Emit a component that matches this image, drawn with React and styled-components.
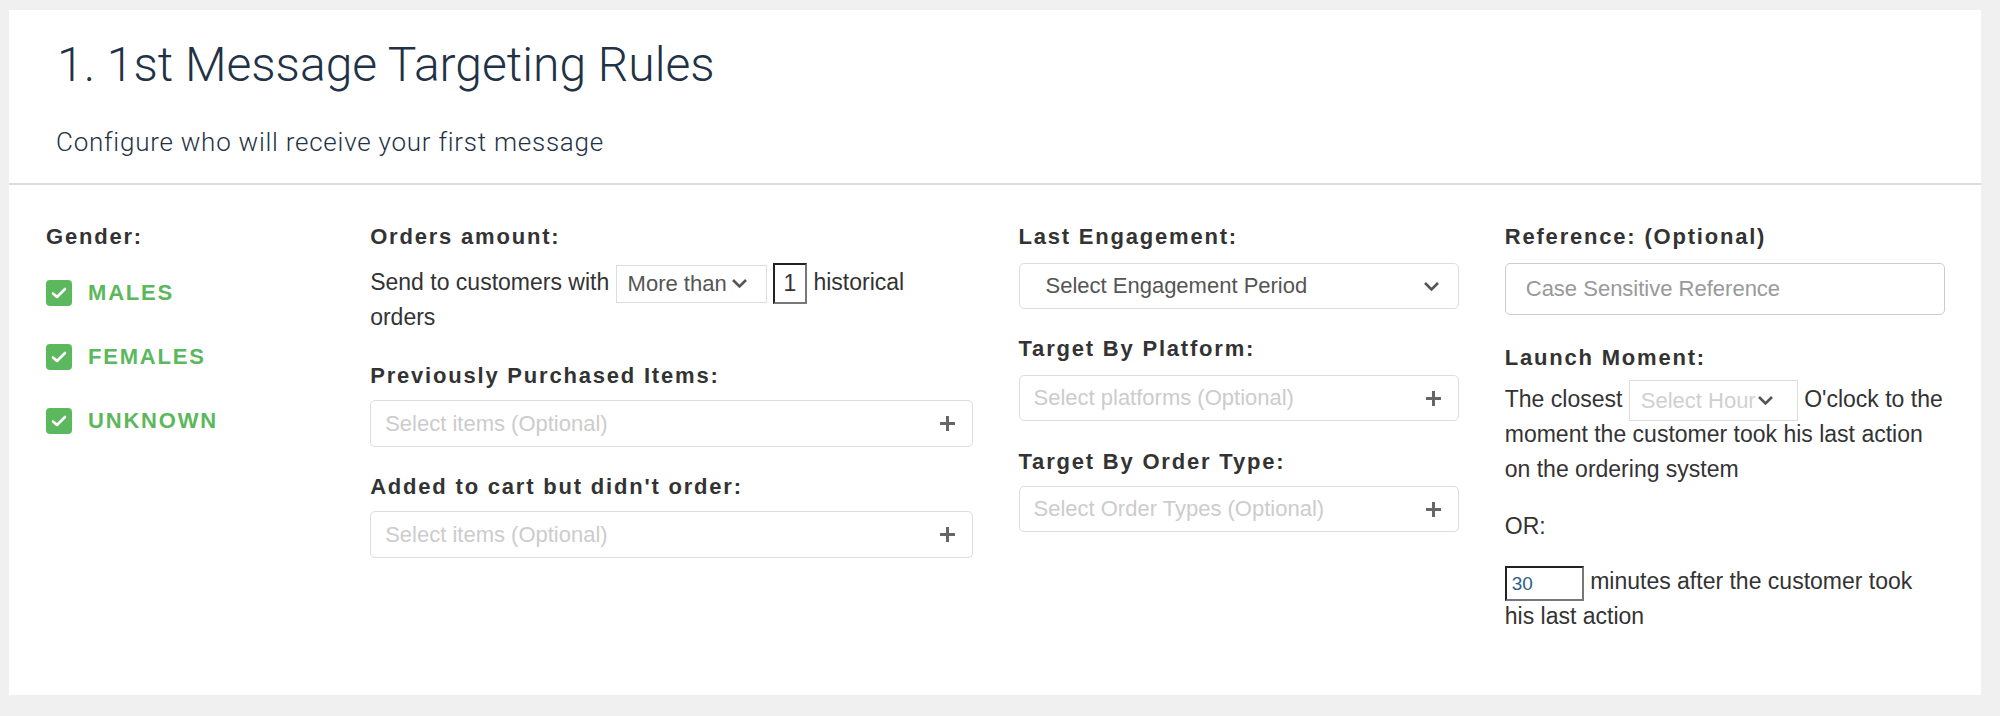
import React from "react";
import styled, { createGlobalStyle } from "styled-components";

const GlobalStyle = createGlobalStyle`
  html, body {
    margin: 0;
    padding: 0;
    background: #f0f0f0;
  }
  body {
    font-family: "Liberation Sans", Arial, sans-serif;
    color: #333;
  }
  * {
    box-sizing: border-box;
  }
`;

const Chevron = () => (
  <svg width="17" height="11" viewBox="0 0 17 11">
    <path d="M2 2 L8.5 8.5 L15 2" fill="none" stroke="#555" strokeWidth="2.6" />
  </svg>
);

const Plus = () => (
  <svg width="17" height="17" viewBox="0 0 17 17">
    <path d="M8.5 1 V16 M1 8.5 H16" fill="none" stroke="#666" strokeWidth="3" />
  </svg>
);

const Check = () => (
  <svg width="16" height="14" viewBox="0 0 16 14">
    <path
      d="M2 7.5 L6 11 L14 3"
      fill="none"
      stroke="#fff"
      strokeWidth="2.6"
      strokeLinecap="round"
      strokeLinejoin="round"
    />
  </svg>
);

const App = () => {
  return (
    <>
      <GlobalStyle />
      <Page>
        <Panel>
          <Header>
            <Title>1. 1st Message Targeting Rules</Title>
            <Subtitle>Configure who will receive your first message</Subtitle>
          </Header>
          <Body>
            <Column>
              <Label>Gender:</Label>
              <Options>
                {["Males", "Females", "Unknown"].map(g => (
                  <Option key={g}>
                    <Box>
                      <Check />
                    </Box>
                    <OptionText>{g}</OptionText>
                  </Option>
                ))}
              </Options>
            </Column>

            <Column>
              <Label>Orders amount:</Label>
              <Sentence top={14}>
                Send to customers with{" "}
                <InlineSelect width={151} height={38}>
                  <span>More than</span>
                  <Chevron />
                </InlineSelect>{" "}
                <NumberBox width={34} height={41}>1</NumberBox> historical
                orders
              </Sentence>
              <Label top={27}>Previously Purchased Items:</Label>
              <Field top={10} height={47}>
                <Placeholder>Select items (Optional)</Placeholder>
                <Plus />
              </Field>
              <Label top={26}>Added to cart but didn't order:</Label>
              <Field top={10} height={47}>
                <Placeholder>Select items (Optional)</Placeholder>
                <Plus />
              </Field>
            </Column>

            <Column>
              <Label>Last Engagement:</Label>
              <Field top={12} height={46} left={26} right={18}>
                <SelectValue>Select Engagement Period</SelectValue>
                <Chevron />
              </Field>
              <Label top={26}>Target By Platform:</Label>
              <Field top={12} height={46}>
                <Placeholder>Select platforms (Optional)</Placeholder>
                <Plus />
              </Field>
              <Label top={27}>Target By Order Type:</Label>
              <Field top={10} height={46}>
                <Placeholder>Select Order Types (Optional)</Placeholder>
                <Plus />
              </Field>
            </Column>

            <Column>
              <Label>Reference: (Optional)</Label>
              <TextInput placeholder="Case Sensitive Reference" readOnly />
              <Label top={29}>Launch Moment:</Label>
              <Sentence top={10}>
                The closest{" "}
                <InlineSelect width={169} height={41} muted>
                  <span>Select Hour</span>
                  <Chevron />
                </InlineSelect>{" "}
                O'clock to the moment the customer took his last action on
                the ordering system
              </Sentence>
              <Sentence top={22}>OR:</Sentence>
              <Sentence top={20}>
                <NumberBox width={79} height={35} blue>
                  30
                </NumberBox>{" "}
                minutes after the customer took his last action
              </Sentence>
            </Column>
          </Body>
        </Panel>
      </Page>
    </>
  );
};

export default App;

const Page = styled.div`
  padding: 10px 19px 21px 9px;
`;

const Panel = styled.section`
  background: #fff;
`;

const Header = styled.header`
  height: 175px;
  padding: 25px 48px 0;
  border-bottom: 2px solid #dcdcdc;
`;

const Title = styled.h1`
  margin: 0;
  font-family: Roboto, "Liberation Sans", sans-serif;
  font-weight: 300;
  font-size: 48px;
  line-height: 60px;
  color: #1f3246;
`;

const Subtitle = styled.p`
  margin: 32px 0 0 -1px;
  font-family: Roboto, "Liberation Sans", sans-serif;
  font-weight: 300;
  font-size: 26px;
  line-height: 30px;
  letter-spacing: 0.75px;
  color: #1f3246;
`;

const Body = styled.div`
  display: grid;
  grid-template-columns: 2fr 4fr 3fr 3fr;
  padding: 38px 13px 61px 14px;
`;

const Column = styled.div`
  display: flex;
  flex-direction: column;
  align-items: flex-start;
  padding: 0 23px;
  min-width: 0;
`;

const Label = styled.div`
  margin-top: ${p => p.top || 0}px;
  font-size: 22px;
  line-height: 28px;
  font-weight: 700;
  letter-spacing: 1.8px;
  color: #333;
  white-space: nowrap;
`;

const Options = styled.div`
  display: flex;
  flex-direction: column;
  gap: 38px;
  margin-top: 29px;
`;

const Option = styled.label`
  display: flex;
  align-items: center;
  gap: 16px;
`;

const Box = styled.span`
  display: flex;
  align-items: center;
  justify-content: center;
  width: 26px;
  height: 26px;
  border-radius: 4px;
  background: #5cb85c;
`;

const OptionText = styled.span`
  font-size: 22px;
  font-weight: 700;
  letter-spacing: 1.8px;
  text-transform: uppercase;
  color: #5cb85c;
`;

const Sentence = styled.p`
  margin: ${p => p.top || 0}px 0 0;
  font-size: 23px;
  line-height: 35px;
  color: #333;
`;

const InlineSelect = styled.span`
  display: inline-flex;
  align-items: center;
  vertical-align: middle;
  width: ${p => p.width}px;
  height: ${p => p.height}px;
  margin: -4px 0;
  padding: 0 0 0 11px;
  border: 1px solid #ddd;
  background: #fff;
  overflow: hidden;
  color: ${p => (p.muted ? "#d0d0d0" : "#555")};
  font-size: 22px;

  span {
    white-space: nowrap;
  }

  svg {
    flex-shrink: 0;
    margin-left: ${p => (p.muted ? 1 : 4)}px;
  }
`;

const NumberBox = styled.span`
  display: inline-flex;
  align-items: center;
  justify-content: ${p => (p.blue ? "flex-start" : "center")};
  vertical-align: middle;
  width: ${p => p.width}px;
  height: ${p => p.height}px;
  margin: -4px 0;
  padding: 0 ${p => (p.blue ? 5 : 0)}px;
  border-style: solid;
  border-width: 2px;
  border-color: #222 #777 #777 #222;
  font-size: ${p => (p.blue ? 19 : 23)}px;
  color: ${p => (p.blue ? "#2d5f8b" : "#333")};
`;

const Field = styled.div`
  display: flex;
  align-items: center;
  justify-content: space-between;
  align-self: stretch;
  height: ${p => p.height}px;
  margin-top: ${p => p.top || 0}px;
  padding: 0 ${p => p.right || 16}px 0 ${p => p.left || 14}px;
  border: 1px solid #ddd;
  border-radius: 5px;
  background: #fff;
`;

const Placeholder = styled.span`
  font-size: 22px;
  color: #ccc;
  white-space: nowrap;
`;

const SelectValue = styled.span`
  font-size: 22px;
  color: #555;
  white-space: nowrap;
`;

const TextInput = styled.input`
  align-self: stretch;
  height: 52px;
  margin-top: 12px;
  padding: 0 20px;
  border: 1px solid #ccc;
  border-radius: 5px;
  font-family: "Liberation Sans", Arial, sans-serif;
  font-size: 22px;
  outline: none;

  &::placeholder {
    color: #999;
  }
`;
